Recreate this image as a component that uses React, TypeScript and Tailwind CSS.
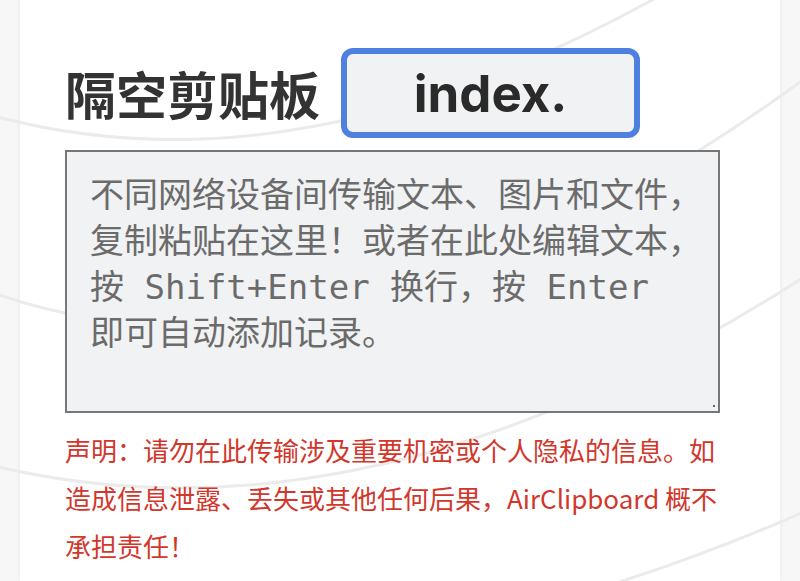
import React from "react";

const placeholder =
  "不同网络设备间传输文本、图片和文件，\n复制粘贴在这里！或者在此处编辑文本，\n按 Shift+Enter 换行，按 Enter\n即可自动添加记录。";

export default function App() {
  return (
    <div className="relative flex h-[581px] w-[800px] overflow-hidden bg-[#f7f7f7]">
      <div className="mx-[20px] flex w-[760px] flex-col bg-white pl-[45px] pt-[48px] shadow-[0_0_5px_rgba(0,0,0,0.07)]">
        <div className="relative z-10 flex items-center gap-[21px]">
          <h1 className="font-['Noto_Sans_CJK_SC',sans-serif] text-[51px] font-bold leading-[60px] text-[#333333]">
            隔空剪贴板
          </h1>
          <div className="flex h-[90px] w-[299px] items-center justify-center rounded-[12px] border-[6px] border-[#4f80e0] bg-[#f1f2f4]">
            <span className="font-['Inter',sans-serif] text-[51px] font-bold leading-none text-[#2a2a2a]">
              index.
            </span>
          </div>
        </div>
        <div className="relative z-10 mt-[12px] h-[263px] w-[655px]">
          <textarea
            className="h-full w-full resize-none border-2 border-[#777777] bg-[#f1f2f4] pl-[23px] pr-[8px] pt-[20px] font-['DejaVu_Sans_Mono','Noto_Sans_CJK_SC',monospace] text-[34px] leading-[46px] text-[#555555] outline-none placeholder:text-[#6b6b6b]"
            placeholder={placeholder}
          />
          <span className="absolute bottom-[6px] right-[5px] h-[2px] w-[2px] bg-[#666666]" />
        </div>
        <p className="relative z-10 mt-[13px] font-['Noto_Sans_CJK_SC',sans-serif] text-[26px] leading-[48px] text-[#d2372c]">
          声明：请勿在此传输涉及重要机密或个人隐私的信息。如
          <br />
          造成信息泄露、丢失或其他任何后果，AirClipboard 概不
          <br />
          承担责任！
        </p>
      </div>
      <svg
        className="pointer-events-none absolute inset-0 z-[1]"
        width="800"
        height="581"
        viewBox="0 0 800 581"
        fill="none"
      >
        <path d="M-10 115 Q300 200 670 -10" stroke="#ebebeb" strokeWidth="3" />
        <path d="M-10 292 Q350 420 830 60" stroke="#ebebeb" strokeWidth="3" />
        <path d="M-10 465 Q380 560 830 260" stroke="#ebebeb" strokeWidth="3" />
        <path d="M560 600 Q700 560 830 500" stroke="#ebebeb" strokeWidth="3" />
      </svg>
    </div>
  );
}
